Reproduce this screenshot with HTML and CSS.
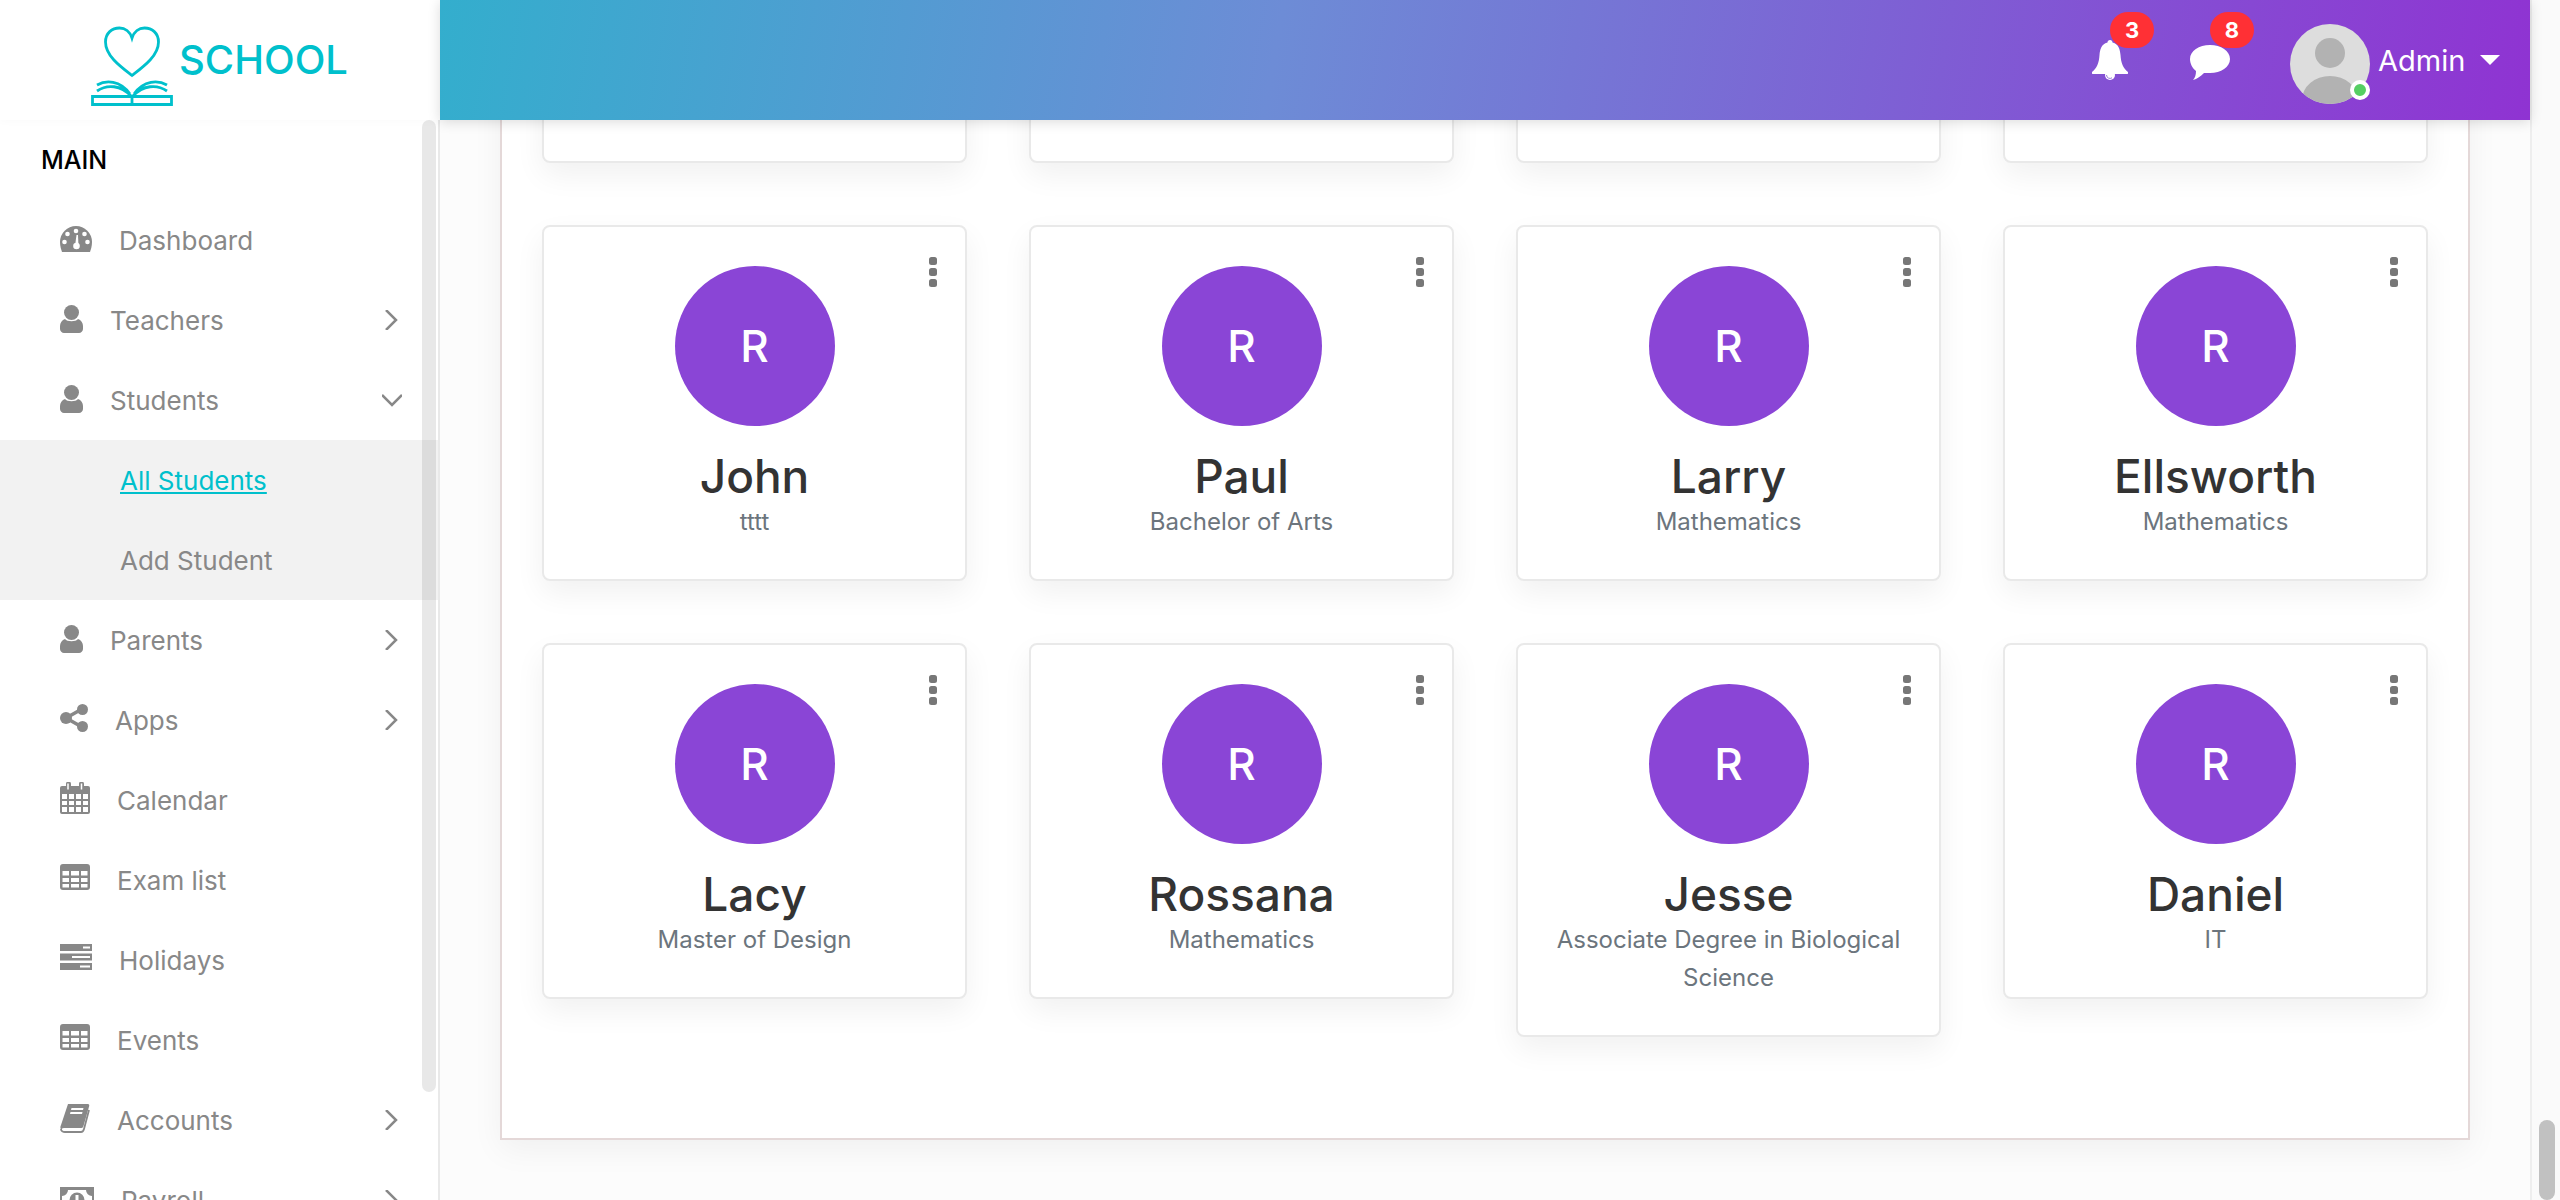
FILE: index.html
```html
<!DOCTYPE html>
<html lang="en">
<head>
    <meta charset="UTF-8">
    <meta name="viewport" content="width=device-width, initial-scale=1.0">
    <title>All Students</title>
    <link rel="stylesheet" href="styles.css">
</head>
<body>
    <div class="page">
        <header class="header">
            <a class="logo" href="#">
                <svg class="logo-icon" viewBox="0 0 82 82" width="82" height="82">
                    <g fill="none" stroke="#00c0cc" stroke-width="2.800">
                        <path d="M41 50.500C30 42 14.500 31 14.500 17C14.500 8 21 3 28.500 3C34 3 39 6.500 41 13C43 6.500 48 3 53.500 3C61 3 67.500 8 67.500 17C67.500 31 52 42 41 50.500Z"/>
                        <path d="M6 60C15 55 29 55 39 69M6 66C16 59 30 60 40 71M76 60C67 55 53 55 43 69M76 66C66 59 52 60 42 71"/>
                        <path d="M1.500 71.500H80.500V79.500H1.500ZM41 71.500V79.500"/>
                    </g>
                </svg>
                <span class="logo-text">SCHOOL</span>
            </a>
            <div class="topbar">
                <a class="top-icon" href="#">
                    <svg viewBox="0 0 36 40" width="36" height="40">
                        <circle cx="18" cy="35" r="5" fill="#fff"/>
                        <path d="M14.500 35a3.500 3.500 0 0 0 5.500 2.800" fill="none" stroke="#9a7bdc" stroke-width="1"/>
                        <path d="M18 0c1.500 0 2.500 1 2.500 2.500C27 4 28 10 28.500 15 29 23 31 28 36 32c.5 1 0 2-1 2H1c-1 0-1.500-1-1-2C5 28 7 23 7.500 15 8 10 9 4 15.500 2.500 15.500 1 16.500 0 18 0z" fill="#fff"/>
                    </svg>
                    <span class="badge">3</span>
                </a>
                <a class="top-icon top-icon-chat" href="#">
                    <svg viewBox="0 0 40 35" width="40" height="35">
                        <path d="M20 0c11 0 20 6 20 14s-9 14-20 14h-6c-3 3-7 6-11 7 2-2 3-5 3-9C2 23 0 18 0 14 0 6 9 0 20 0z" fill="#fff"/>
                    </svg>
                    <span class="badge">8</span>
                </a>
                <a class="user" href="#">
                    <span class="avatar">
                        <svg viewBox="0 0 80 80" width="80" height="80">
                            <clipPath id="avatar-clip"><circle cx="40" cy="40" r="40"/></clipPath>
                            <circle cx="40" cy="40" r="40" fill="#ddd"/>
                            <circle cx="40" cy="29" r="15" fill="#b2b2b2"/>
                            <ellipse cx="40" cy="76" rx="28" ry="24" fill="#b2b2b2" clip-path="url(#avatar-clip)"/>
                        </svg>
                        <span class="status"></span>
                    </span>
                    <span class="user-name">Admin</span>
                    <span class="caret"></span>
                </a>
            </div>
        </header>

        <div class="body-row">
            <aside class="sidebar">
                <div class="menu-title">MAIN</div>
                <ul class="menu">
                    <li class="menu-item">
                        <svg class="icon icon-gauge" viewBox="0 0 32 26" width="32" height="26"><use href="#i-gauge"/></svg>
                        <span>Dashboard</span>
                    </li>
                    <li class="menu-item">
                        <svg class="icon" viewBox="0 0 23 28" width="23" height="28"><use href="#i-user"/></svg>
                        <span>Teachers</span>
                        <svg class="chev" viewBox="0 0 20 20" width="20" height="20"><path d="M4 0l10 10L4 20"/></svg>
                    </li>
                    <li class="menu-item">
                        <svg class="icon" viewBox="0 0 23 28" width="23" height="28"><use href="#i-user"/></svg>
                        <span>Students</span>
                        <svg class="chev" viewBox="0 0 20 20" width="20" height="20"><path d="M0 5l10 10L20 5"/></svg>
                    </li>
                    <li class="submenu">
                        <a class="sub-item active" href="#">All Students</a>
                        <a class="sub-item" href="#">Add Student</a>
                    </li>
                    <li class="menu-item">
                        <svg class="icon" viewBox="0 0 23 28" width="23" height="28"><use href="#i-user"/></svg>
                        <span>Parents</span>
                        <svg class="chev" viewBox="0 0 20 20" width="20" height="20"><path d="M4 0l10 10L4 20"/></svg>
                    </li>
                    <li class="menu-item">
                        <svg class="icon icon-mid" viewBox="0 0 28 28" width="28" height="28">
                            <path d="M22 5L6 14l16 9" fill="none" stroke="#888" stroke-width="3.500"/>
                            <circle cx="22.500" cy="5.500" r="5.500" fill="#888"/>
                            <circle cx="6" cy="14" r="6" fill="#888"/>
                            <circle cx="22.500" cy="22.500" r="5.500" fill="#888"/>
                        </svg>
                        <span>Apps</span>
                        <svg class="chev" viewBox="0 0 20 20" width="20" height="20"><path d="M4 0l10 10L4 20"/></svg>
                    </li>
                    <li class="menu-item">
                        <svg class="icon icon-mid" viewBox="0 0 30 32" width="30" height="32">
                            <path fill-rule="evenodd" fill="#888" d="M2 4h4V2a2 2 0 0 1 5 0v2h8V2a2 2 0 0 1 5 0v2h4a2 2 0 0 1 2 2v24a2 2 0 0 1-2 2H2a2 2 0 0 1-2-2V6a2 2 0 0 1 2-2zM2 12v5h5v-5zM9 12v5h5v-5zM16 12v5h5v-5zM23 12v5h5v-5zM2 19v4h5v-4zM9 19v4h5v-4zM16 19v4h5v-4zM23 19v4h5v-4zM2 25v5h5v-5zM9 25v5h5v-5zM16 25v5h5v-5zM23 25v5h5v-5z"/>
                            <path d="M8 1.500v6M21.500 1.500v6" stroke="#fff" stroke-width="1.500"/>
                        </svg>
                        <span>Calendar</span>
                    </li>
                    <li class="menu-item">
                        <svg class="icon icon-up" viewBox="0 0 30 26" width="30" height="26"><use href="#i-table"/></svg>
                        <span>Exam list</span>
                    </li>
                    <li class="menu-item">
                        <svg class="icon icon-up" viewBox="0 0 32 26" width="32" height="26">
                            <path fill="#888" d="M0 0h32v7H0zM0 9.500h32v7H0zM0 19h32v7H0z"/>
                            <path fill="#fff" d="M23 2.500h7v2h-7zM12 12h18v2H12zM20 21.500h10v2H20z"/>
                        </svg>
                        <span>Holidays</span>
                    </li>
                    <li class="menu-item">
                        <svg class="icon icon-up" viewBox="0 0 30 26" width="30" height="26"><use href="#i-table"/></svg>
                        <span>Events</span>
                    </li>
                    <li class="menu-item">
                        <svg class="icon icon-mid" viewBox="0 0 30 29" width="30" height="29">
                            <path fill="#888" d="M8 0h20c1 0 1.500 1 1.200 2L23.500 22c-.3 1-1 2-2 2H4c-2 0-3 1-2 2-2-1-2-3-1-5z"/>
                            <path fill="none" stroke="#888" stroke-width="1.800" d="M29 6l-5 19c-.5 2-1.500 3-3 3H5c-2 0-4-1-4-3"/>
                            <path fill="#fff" d="M11.500 4h12l-.5 2H11zM10.500 8h12l-.5 2H10z"/>
                        </svg>
                        <span>Accounts</span>
                        <svg class="chev" viewBox="0 0 20 20" width="20" height="20"><path d="M4 0l10 10L4 20"/></svg>
                    </li>
                    <li class="menu-item">
                        <svg class="icon icon-flat" viewBox="0 0 34 26" width="34" height="26">
                            <path fill="#888" fill-rule="evenodd" d="M0 0h34v26H0zM2 3v20h30V3z"/>
                            <circle cx="17" cy="13" r="7.500" fill="#888"/>
                            <path fill="#fff" d="M15.500 8h3v10h-3z"/>
                            <path fill="#888" d="M2 3h6a6 6 0 0 1-6 6zM32 3h-6a6 6 0 0 0 6 6z"/>
                        </svg>
                        <span>Payroll</span>
                        <svg class="chev" viewBox="0 0 20 20" width="20" height="20"><path d="M4 0l10 10L4 20"/></svg>
                    </li>
                </ul>
                <div class="side-scroll"></div>
            </aside>

            <main class="content">
                <section class="panel">
                    <div class="card card-cut"></div>
                    <div class="card card-cut"></div>
                    <div class="card card-cut"></div>
                    <div class="card card-cut"></div>

                    <div class="card">
                        <span class="kebab"><i></i><i></i><i></i></span>
                        <div class="initial">R</div>
                        <h3 class="name">John</h3>
                        <p class="subject">tttt</p>
                    </div>
                    <div class="card">
                        <span class="kebab"><i></i><i></i><i></i></span>
                        <div class="initial">R</div>
                        <h3 class="name">Paul</h3>
                        <p class="subject">Bachelor of Arts</p>
                    </div>
                    <div class="card">
                        <span class="kebab"><i></i><i></i><i></i></span>
                        <div class="initial">R</div>
                        <h3 class="name">Larry</h3>
                        <p class="subject">Mathematics</p>
                    </div>
                    <div class="card">
                        <span class="kebab"><i></i><i></i><i></i></span>
                        <div class="initial">R</div>
                        <h3 class="name">Ellsworth</h3>
                        <p class="subject">Mathematics</p>
                    </div>
                    <div class="card">
                        <span class="kebab"><i></i><i></i><i></i></span>
                        <div class="initial">R</div>
                        <h3 class="name">Lacy</h3>
                        <p class="subject">Master of Design</p>
                    </div>
                    <div class="card">
                        <span class="kebab"><i></i><i></i><i></i></span>
                        <div class="initial">R</div>
                        <h3 class="name">Rossana</h3>
                        <p class="subject">Mathematics</p>
                    </div>
                    <div class="card">
                        <span class="kebab"><i></i><i></i><i></i></span>
                        <div class="initial">R</div>
                        <h3 class="name">Jesse</h3>
                        <p class="subject">Associate Degree in Biological Science</p>
                    </div>
                    <div class="card">
                        <span class="kebab"><i></i><i></i><i></i></span>
                        <div class="initial">R</div>
                        <h3 class="name">Daniel</h3>
                        <p class="subject">IT</p>
                    </div>
                </section>
            </main>
        </div>
    </div>

    <div class="page-scroll"><div class="page-thumb"></div></div>

    <svg class="sprite" width="0" height="0">
        <symbol id="i-gauge" viewBox="0 0 32 26">
            <path fill="#888" d="M16 0a16 16 0 0 1 16 16c0 4-1 7-2 10H2C1 23 0 20 0 16A16 16 0 0 1 16 0z"/>
            <g fill="#fff">
                <circle cx="16" cy="5" r="2.300"/>
                <circle cx="7.500" cy="8" r="2.300"/>
                <circle cx="24.500" cy="8" r="2.300"/>
                <circle cx="4.500" cy="16" r="2.300"/>
                <circle cx="27.500" cy="16" r="2.300"/>
                <circle cx="16.500" cy="20" r="3.300"/>
                <path d="M15 20l1.500-11h1.500l.5 11z"/>
            </g>
        </symbol>
        <symbol id="i-user" viewBox="0 0 23 28">
            <circle cx="11.500" cy="7.500" r="7.500" fill="#888"/>
            <path fill="#888" d="M5 14c2 3 11 3 13 0 3 1 5 4 5 7v3c0 2-2 4-4 4H4c-2 0-4-2-4-4v-3c0-3 2-6 5-7z"/>
        </symbol>
        <symbol id="i-table" viewBox="0 0 30 26">
            <path fill="#888" fill-rule="evenodd" d="M3 0h24a3 3 0 0 1 3 3v20a3 3 0 0 1-3 3H3a3 3 0 0 1-3-3V3a3 3 0 0 1 3-3zM2.500 7v4.500h6.500V7zM11 7v4.500h8V7zM21 7v4.500h6.500V7zM2.500 14v4h6.500v-4zM11 14v4h8v-4zM21 14v4h6.500v-4zM2.500 20v3.500h6.500V20zM11 20v3.500h8V20zM21 20v3.500h6.500V20z"/>
        </symbol>
    </svg>
</body>
</html>
```

FILE: styles.css
```css
* {
    box-sizing: border-box;
}

html,
body {
    height: 100%;
}

body {
    display: flex;
    margin: 0;
    overflow: hidden;
    font-family: Inter, "Noto Sans", sans-serif;
    font-size: 26px;
    background-color: #fcfcfc;
    color: #888;
}

a {
    text-decoration: none;
    color: inherit;
}

ul {
    margin: 0;
    padding: 0;
    list-style: none;
}

.sprite {
    position: absolute;
}

.page {
    display: flex;
    flex-direction: column;
    flex: 1;
    min-width: 0;
    height: 1200px;
}

.page-scroll {
    display: flex;
    align-items: flex-end;
    justify-content: center;
    width: 30px;
    padding-left: 2px;
    border-left: 2px solid #eee;
    background-color: #fafafa;
}

.page-thumb {
    width: 16px;
    height: 80px;
    border-radius: 8px;
    background-color: #c1c1c1;
}

/* header */
.header {
    position: relative;
    z-index: 3;
    display: flex;
    flex: none;
    height: 120px;
}

.logo {
    display: flex;
    align-items: center;
    flex: none;
    width: 440px;
    padding-left: 91px;
    background-color: #fff;
    box-shadow: 0 2px 8px rgba(0, 0, 0, 0.02);
}

.logo-icon {
    margin-top: 12px;
}

.logo-text {
    margin-left: 6px;
    margin-top: -1px;
    font-size: 40px;
    font-weight: 500;
    color: #00c0cc;
}

.topbar {
    display: flex;
    align-items: center;
    justify-content: flex-end;
    flex: 1;
    padding-right: 30px;
    background: linear-gradient(100deg, #33aecd 0%, #6d8cd6 40%, #8f33d2 100%);
    box-shadow: 0 2px 12px rgba(0, 0, 0, 0.14);
}

.top-icon {
    position: relative;
    display: flex;
    margin-right: 62px;
}

.top-icon-chat {
    margin-top: 5px;
    margin-right: 60px;
}

.badge {
    position: absolute;
    top: -28px;
    left: 18px;
    width: 44px;
    height: 36px;
    border-radius: 18px;
    background-color: #ff3035;
    color: #fff;
    font-size: 22px;
    font-weight: 700;
    line-height: 36px;
    text-align: center;
}

.top-icon-chat .badge {
    top: -33px;
    left: 20px;
}

.user {
    display: flex;
    align-items: center;
    color: #fff;
}

.avatar {
    position: relative;
    display: flex;
    width: 80px;
    height: 80px;
    margin-top: 8px;
}

.status {
    position: absolute;
    right: 0;
    bottom: 4px;
    width: 20px;
    height: 20px;
    border: 4px solid #fff;
    border-radius: 50%;
    background-color: #55ce63;
}

.user-name {
    width: 102px;
    margin-left: 8px;
    font-size: 29px;
}

.caret {
    width: 0;
    height: 0;
    border-top: 10px solid #fff;
    border-left: 10px solid transparent;
    border-right: 10px solid transparent;
}

/* sidebar */
.body-row {
    display: flex;
    flex: 1;
    min-height: 0;
}

.sidebar {
    position: relative;
    flex: none;
    width: 440px;
    overflow: hidden;
    border-right: 2px solid #e9e9e9;
    background-color: #fff;
}

.menu-title {
    display: flex;
    align-items: center;
    height: 80px;
    padding-left: 41px;
    font-size: 25px;
    font-weight: 500;
    color: #000;
}

.menu-item {
    display: flex;
    align-items: center;
    height: 80px;
    padding: 0 36px 0 60px;
}

.icon {
    flex: none;
    margin-right: 27px;
    margin-top: -3px;
}

.icon-gauge {
    margin-top: -2px;
}

.icon-mid {
    margin-top: -4px;
}

.icon-up {
    margin-top: -6px;
}

.icon-flat {
    margin-top: 0;
}

.chev {
    flex: none;
    margin-left: auto;
    fill: none;
    stroke: #888;
    stroke-width: 2.500;
}

.submenu {
    background-color: #f2f2f2;
}

.sub-item {
    display: flex;
    align-items: center;
    height: 80px;
    padding-left: 120px;
}

.sub-item.active {
    color: #00c0cc;
    text-decoration: underline;
}

.side-scroll {
    position: absolute;
    top: 0;
    right: 2px;
    width: 14px;
    height: 972px;
    border-radius: 7px;
    background-color: rgba(0, 0, 0, 0.09);
}

/* content, scrolled so the first card row sits under the header */
.content {
    flex: 1;
    min-width: 0;
    overflow: hidden;
}

.panel {
    display: grid;
    grid-template-columns: repeat(4, 1fr);
    align-items: start;
    gap: 62px;
    margin: -315px 60px 0;
    padding: 0 40px 101px;
    border: 2px solid #e4d8d8;
    background-color: #fff;
    box-shadow: 0 10px 30px rgba(0, 0, 0, 0.05);
}

.card {
    position: relative;
    padding: 39px 30px 38.500px;
    border: 2px solid #e9e9e9;
    border-radius: 8px;
    background-color: #fff;
    box-shadow: 0 12px 30px rgba(0, 0, 0, 0.06);
    text-align: center;
}

.card-cut {
    height: 356px;
}

.kebab {
    position: absolute;
    top: 30px;
    right: 28px;
    display: flex;
    flex-direction: column;
    gap: 3px;
}

.kebab i {
    width: 8px;
    height: 8px;
    border-radius: 2.500px;
    background-color: #777;
}

.initial {
    display: flex;
    align-items: center;
    justify-content: center;
    width: 160px;
    height: 160px;
    margin: 0 auto;
    border-radius: 50%;
    background-color: #8a45d6;
    color: #fff;
    font-size: 44px;
    font-weight: 500;
}

.name {
    margin: 24px 0 0;
    font-size: 46px;
    font-weight: 500;
    line-height: 53px;
    color: #333;
}

.subject {
    margin: 0;
    font-size: 24px;
    line-height: 37.500px;
    color: #6c757d;
}
```
